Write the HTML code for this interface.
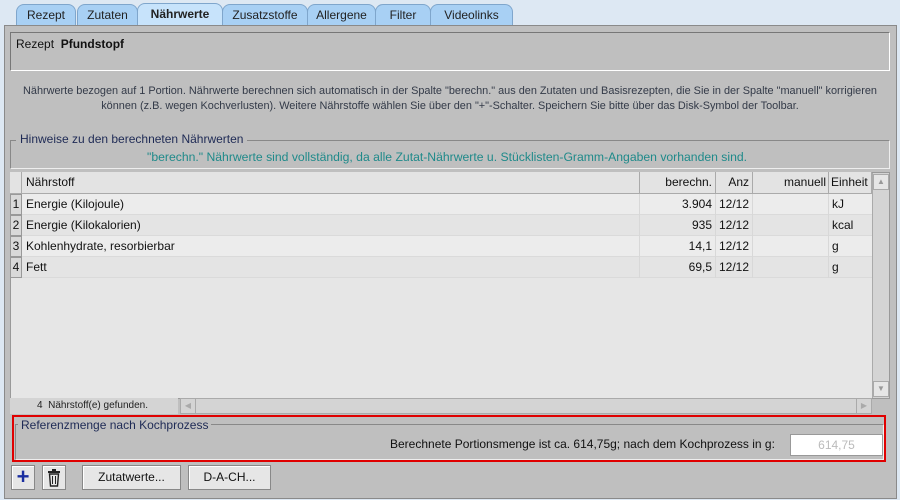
<!DOCTYPE html><html><head><meta charset="utf-8"><style>
*{box-sizing:border-box;margin:0;padding:0}
body{width:900px;height:500px;background:#dde8f3;font-family:"Liberation Sans",Arial,sans-serif;font-size:12px;color:#111;position:relative;overflow:hidden}
.a{position:absolute}
.tab{position:absolute;top:4px;height:22px;background:#a8d0f4;border:1px solid #7fa6cc;border-bottom:none;border-radius:8px 8px 0 0;text-align:center;line-height:21px;font-size:12px;color:#222}
.sel{background:#c7e3fb;font-weight:bold;top:3px;height:23px}
.row{position:absolute;left:10px;width:862px;height:21px;border-bottom:1px solid #dadada}
.row div{position:absolute;top:0;height:21px;line-height:21px;border-right:1px solid #d8d8d8}
.row .num{left:0;width:12px;background:#d9d9d9;text-align:center;border:1px solid #999;line-height:19px}
.hd div{position:absolute;top:0;height:21px;line-height:21px;border-right:1px solid #aaa;background:#e3e3e3}
.btn{position:absolute;top:465px;height:25px;background:#e6e6e6;border:1px solid #888;box-shadow:inset 1px 1px #fff;text-align:center;line-height:23px}
</style></head><body>
<div class="tab" style="left:16px;width:60px">Rezept</div>
<div class="tab" style="left:77px;width:61px">Zutaten</div>
<div class="tab" style="left:222px;width:86px">Zusatzstoffe</div>
<div class="tab" style="left:307px;width:69px">Allergene</div>
<div class="tab" style="left:375px;width:56px">Filter</div>
<div class="tab" style="left:430px;width:83px">Videolinks</div>
<div class="tab sel" style="left:137px;width:86px">Nährwerte</div>
<div class="a" style="left:4px;top:25px;width:893px;height:474px;background:#bfbfbf;border:1px solid #8a8a8a"></div>
<div class="a" style="left:10px;top:32px;width:880px;height:39px;border:1px solid #777;border-bottom-color:#fff;border-right-color:#fff;padding:4px 5px">Rezept&nbsp; <b>Pfundstopf</b></div>
<div class="a" style="left:0;top:84px;width:900px;text-align:center;font-size:10.9px;line-height:15px;color:#333a48">Nährwerte bezogen auf 1 Portion. Nährwerte berechnen sich automatisch in der Spalte "berechn." aus den Zutaten und Basisrezepten, die Sie in der Spalte "manuell" korrigieren<br>können (z.B. wegen Kochverlusten). Weitere Nährstoffe wählen Sie über den "+"-Schalter. Speichern Sie bitte über das Disk-Symbol der Toolbar.</div>
<div class="a" style="left:10px;top:140px;width:880px;height:29px;border:1px solid #888;border-right-color:#eee;border-bottom-color:#eee"></div>
<div class="a" style="left:16px;top:132px;background:#bfbfbf;padding:0 4px;color:#1e2a55;font-size:12px">Hinweise zu den berechneten Nährwerten</div>
<div class="a" style="left:147px;top:150px;color:#1f8a8a;font-size:12.2px;white-space:nowrap">"berechn." Nährwerte sind vollständig, da alle Zutat-Nährwerte u. Stücklisten-Gramm-Angaben vorhanden sind.</div>
<div class="a" style="left:10px;top:172px;width:880px;height:227px;background:#e6e6e6;border:1px solid #999"></div>
<div class="row hd" style="top:172px;height:22px;border-bottom:1px solid #aaa">
<div style="left:0;width:12px"></div><div style="left:12px;width:618px;padding-left:4px">Nährstoff</div><div style="left:630px;width:76px;text-align:right;padding-right:3px">berechn.</div><div style="left:706px;width:37px;text-align:right;padding-right:3px">Anz</div><div style="left:743px;width:76px;text-align:right;padding-right:2px">manuell</div><div style="left:819px;width:43px;padding-left:2px">Einheit</div></div>
<div class="row" style="top:194px;background:#ececec"><div class="num">1</div><div style="left:12px;width:618px;padding-left:4px">Energie (Kilojoule)</div><div style="left:630px;width:76px;text-align:right;padding-right:3px">3.904</div><div style="left:706px;width:37px;padding-left:3px">12/12</div><div style="left:743px;width:76px"></div><div style="left:819px;width:43px;padding-left:3px;border:none">kJ</div></div>
<div class="row" style="top:215px;background:#e4e4e4"><div class="num">2</div><div style="left:12px;width:618px;padding-left:4px">Energie (Kilokalorien)</div><div style="left:630px;width:76px;text-align:right;padding-right:3px">935</div><div style="left:706px;width:37px;padding-left:3px">12/12</div><div style="left:743px;width:76px"></div><div style="left:819px;width:43px;padding-left:3px;border:none">kcal</div></div>
<div class="row" style="top:236px;background:#ececec"><div class="num">3</div><div style="left:12px;width:618px;padding-left:4px">Kohlenhydrate, resorbierbar</div><div style="left:630px;width:76px;text-align:right;padding-right:3px">14,1</div><div style="left:706px;width:37px;padding-left:3px">12/12</div><div style="left:743px;width:76px"></div><div style="left:819px;width:43px;padding-left:3px;border:none">g</div></div>
<div class="row" style="top:257px;background:#e4e4e4"><div class="num">4</div><div style="left:12px;width:618px;padding-left:4px">Fett</div><div style="left:630px;width:76px;text-align:right;padding-right:3px">69,5</div><div style="left:706px;width:37px;padding-left:3px">12/12</div><div style="left:743px;width:76px"></div><div style="left:819px;width:43px;padding-left:3px;border:none">g</div></div>
<div class="a" style="left:872px;top:173px;width:17px;height:225px;background:#d4d4d4;border-left:1px solid #aaa"></div>
<div class="a" style="left:873px;top:174px;width:16px;height:16px;background:#e6e6e6;border:1px solid #aaa;color:#999;font-size:8px;text-align:center;line-height:14px">▲</div>
<div class="a" style="left:873px;top:381px;width:16px;height:16px;background:#e6e6e6;border:1px solid #aaa;color:#999;font-size:8px;text-align:center;line-height:14px">▼</div>
<div class="a" style="left:10px;top:398px;width:168px;height:16px;background:#d4d4d4;font-size:10px;line-height:16px;padding-left:27px;color:#222">4&nbsp; Nährstoff(e) gefunden.</div>
<div class="a" style="left:180px;top:398px;width:692px;height:16px;background:#d4d4d4;border:1px solid #aaa"></div>
<div class="a" style="left:180px;top:398px;width:16px;height:16px;border:1px solid #aaa;color:#aaa;font-size:8px;line-height:14px;text-align:center">◀</div>
<div class="a" style="left:856px;top:398px;width:16px;height:16px;border:1px solid #aaa;color:#aaa;font-size:8px;line-height:14px;text-align:center">▶</div>
<div class="a" style="left:12px;top:415px;width:874px;height:47px;border:2px solid #e00000"></div>
<div class="a" style="left:15px;top:424px;width:869px;height:36px;border:1px solid #888;border-right-color:#eee;border-bottom-color:#eee"></div>
<div class="a" style="left:18px;top:418px;background:#bfbfbf;padding:0 3px;color:#1e2a55">Referenzmenge nach Kochprozess</div>
<div class="a" style="left:390px;top:437px;color:#111">Berechnete Portionsmenge ist ca. 614,75g; nach dem Kochprozess in g:</div>
<div class="a" style="left:790px;top:434px;width:93px;height:22px;background:#fff;border:1px solid #999;color:#bbb;text-align:center;line-height:20px">614,75</div>
<div class="btn" style="left:11px;width:24px;color:#1a2ea0;font-size:22px;font-weight:bold;line-height:22px">+</div>
<div class="btn" style="left:42px;width:24px"><svg width="14" height="18" viewBox="0 0 14 18" style="margin-top:3px"><rect x="1" y="2" width="12" height="2" fill="#222"/><rect x="5" y="0" width="4" height="2" fill="#222"/><path d="M2.5 5h9l-1 12h-7z" fill="none" stroke="#222" stroke-width="1.4"/><path d="M5.5 7v8M8.5 7v8" stroke="#222" stroke-width="1"/></svg></div>
<div class="btn" style="left:82px;width:99px">Zutatwerte...</div>
<div class="btn" style="left:188px;width:83px">D-A-CH...</div>
</body></html>
